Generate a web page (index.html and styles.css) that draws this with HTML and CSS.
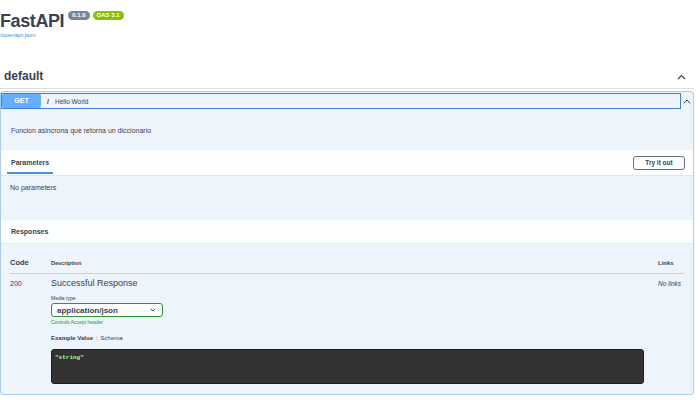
FILE: index.html
```html
<!DOCTYPE html>
<html lang="en">
<head>
  <meta charset="UTF-8" />
  <title>FastAPI - Swagger UI</title>
  <link rel="stylesheet" href="styles.css">
</head>
<body>
  <div class="page">
    <header class="info">
      <h1 class="title">FastAPI<span class="badge version">0.1.0</span><span class="badge oas">OAS 3.1</span></h1>
      <a class="spec-link" href="#">/openapi.json</a>
    </header>

    <section class="tag-section">
      <div class="tag-header">
        <h3>default</h3>
        <svg class="chevron" width="9" height="6" viewBox="0 0 9 6"><path d="M1 5 L4.5 1.5 L8 5" fill="none" stroke="#3b4151" stroke-width="1.2"/></svg>
      </div>

      <div class="opblock">
        <div class="summary">
          <div class="summary-main">
            <span class="method">GET</span>
            <span class="path">/</span>
            <span class="summary-desc">Hello World</span>
          </div>
          <div class="summary-toggle">
            <svg width="8" height="5" viewBox="0 0 8 5"><path d="M0.8 4.3 L4 1 L7.2 4.3" fill="none" stroke="#3b4151" stroke-width="1"/></svg>
          </div>
        </div>

        <div class="description">Funcion asincrona que retorna un diccionario</div>

        <div class="section-bar">
          <div class="tab">Parameters</div>
          <button class="try-out">Try it out</button>
        </div>
        <div class="params-body">No parameters</div>

        <div class="section-bar responses-bar">
          <h4>Responses</h4>
        </div>
        <div class="responses-body">
          <div class="resp-grid resp-head">
            <div class="col-code">Code</div>
            <div class="col-desc">Description</div>
            <div class="col-links">Links</div>
          </div>
          <div class="resp-grid resp-row">
            <div class="cell-code">200</div>
            <div class="cell-desc">
              <div class="resp-title">Successful Response</div>
              <div class="media-label">Media type</div>
              <div class="media-select">
                <span>application/json</span>
                <svg width="6" height="4" viewBox="0 0 6 4"><path d="M0.7 0.8 L3 3 L5.3 0.8" fill="none" stroke="#3b4151" stroke-width="1"/></svg>
              </div>
              <div class="media-note">Controls Accept header</div>
              <div class="example-tabs"><span class="active">Example Value</span><span class="sep">|</span><span>Schema</span></div>
              <pre class="example-code">"string"</pre>
            </div>
            <div class="cell-links">No links</div>
          </div>
        </div>
      </div>
    </section>
  </div>
</body>
</html>
```

FILE: styles.css
```css
body {
  margin: 0;
  background: #fff;
  font-family: "Liberation Sans", Arial, sans-serif;
  color: #3b4151;
}
.page {
  width: 694px;
}
.info {
  padding-top: 10px;
}
.title {
  display: flex;
  align-items: flex-start;
  margin: 0;
  font-size: 18px;
  line-height: 22px;
  letter-spacing: -0.4px;
  font-weight: 700;
  color: #3b4151;
}
.badge {
  margin-top: 1px;
  padding: 0 4px;
  border-radius: 5px;
  font-size: 6px;
  line-height: 9px;
  letter-spacing: 0;
  color: #fff;
}
.version {
  margin-left: 4px;
  background: #7d8492;
}
.oas {
  margin-left: 3px;
  background: #89bf04;
}
.spec-link {
  display: block;
  font-size: 6px;
  line-height: 7px;
  color: #4990e2;
  text-decoration: none;
}
.tag-header {
  display: flex;
  justify-content: space-between;
  align-items: center;
  height: 22px;
  margin-top: 27px;
  padding: 0 8px 0 4px;
  border-bottom: 1px solid #d9dee6;
}
.tag-header h3 {
  margin: 0 0 2px;
  font-size: 12px;
  line-height: 20px;
  font-weight: 700;
}
.opblock {
  margin-top: 2px;
  border: 1px solid #a9cef2;
  border-radius: 3px;
  background: #edf4fc;
}
.summary {
  display: flex;
  padding-top: 1px;
}
.summary-main {
  flex: 1;
  display: flex;
  align-items: center;
  height: 16px;
  box-sizing: border-box;
  border: 1px solid #3d80d8;
}
.method {
  width: 39px;
  height: 14px;
  line-height: 14px;
  text-align: center;
  border-radius: 2px;
  background: #61affe;
  color: #fff;
  font-size: 7px;
  font-weight: 700;
}
.path {
  padding: 0 6px;
  font-size: 7px;
  font-weight: 700;
}
.summary-desc {
  font-size: 6.5px;
}
.summary-toggle {
  width: 12px;
  display: flex;
  justify-content: center;
  align-items: center;
  height: 16px;
}
.description {
  padding: 17px 10px 15px;
  font-size: 7px;
  line-height: 9px;
}
.section-bar {
  display: flex;
  justify-content: space-between;
  align-items: center;
  height: 26px;
  box-sizing: border-box;
  padding: 0 8px 0 6px;
  background: rgba(255, 255, 255, 0.85);
  border-bottom: 1px solid #dfe5ec;
}
.tab {
  align-self: flex-start;
  height: 24px;
  box-sizing: border-box;
  padding: 3px 4px 0;
  display: flex;
  align-items: center;
  border-bottom: 2px solid #4990e2;
  font-size: 7px;
  font-weight: 700;
}
.try-out {
  width: 52px;
  height: 14px;
  padding: 0;
  border: 1px solid #6b6f7a;
  border-radius: 3px;
  background: transparent;
  font-family: inherit;
  font-size: 6.5px;
  font-weight: 700;
  color: #3b4151;
}
.params-body {
  height: 44px;
  box-sizing: border-box;
  padding: 7px 9px;
  font-size: 7px;
  line-height: 9px;
}
.responses-bar {
  height: 24px;
  padding-left: 10px;
  border-bottom: 1px solid #e4eaf1;
}
.responses-bar h4 {
  margin: 0;
  font-size: 7px;
  font-weight: 700;
}
.responses-body {
  padding: 0 9px 10px;
}
.resp-grid {
  display: grid;
  grid-template-columns: 41px 1fr 26px;
}
.resp-head {
  padding: 14px 0 5px;
  border-bottom: 1px solid #c9d1dc;
  align-items: center;
  font-weight: 700;
}
.col-code {
  font-size: 7.5px;
  line-height: 10px;
}
.col-desc {
  font-size: 5.5px;
}
.col-links {
  font-size: 6px;
}
.cell-code {
  padding-top: 5px;
  font-size: 7px;
  line-height: 9px;
}
.cell-desc {
  padding-right: 14px;
}
.resp-title {
  padding-top: 4px;
  font-size: 9px;
  line-height: 11px;
}
.media-label {
  margin-top: 6px;
  font-size: 5px;
  line-height: 6px;
}
.media-select {
  display: flex;
  justify-content: space-between;
  align-items: center;
  width: 112px;
  height: 14px;
  box-sizing: border-box;
  margin-top: 2px;
  padding: 0 6px 0 5px;
  border: 1.5px solid #2f962f;
  border-radius: 3px;
  background: #fff;
  font-size: 8px;
  font-weight: 700;
}
.media-note {
  margin-top: 2px;
  font-size: 5px;
  line-height: 6px;
  color: #2f962f;
}
.example-tabs {
  margin-top: 9px;
  font-size: 6px;
  line-height: 8px;
}
.example-tabs .active {
  font-weight: 700;
}
.example-tabs .sep {
  margin: 0 3px;
  color: #b5bac4;
}
.example-code {
  height: 35px;
  box-sizing: border-box;
  margin: 7px 0 0;
  padding: 4px 3px;
  background: #333;
  border: 1px solid #1e1e1e;
  border-radius: 3px;
  font-family: "Liberation Mono", "DejaVu Sans Mono", monospace;
  font-size: 6px;
  line-height: 8px;
  font-weight: 700;
  color: #a2fca2;
}
.cell-links {
  padding-top: 5px;
  font-size: 6.5px;
  line-height: 9px;
  font-style: italic;
}
```
